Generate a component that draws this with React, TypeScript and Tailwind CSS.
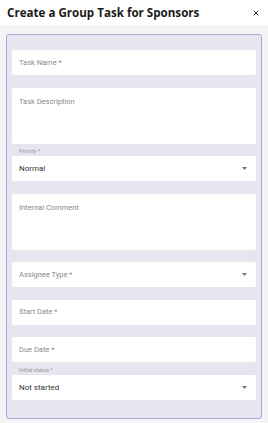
import { X } from 'lucide-react';

type Field = {
  label: string;
  kind: 'input' | 'area' | 'select';
  value?: string;
};

const fields: Field[] = [
  { label: 'Task Name *', kind: 'input' },
  { label: 'Task Description', kind: 'area' },
  { label: 'Priority *', kind: 'select', value: 'Normal' },
  { label: 'Internal Comment', kind: 'area' },
  { label: 'Assignee Type *', kind: 'select' },
  { label: 'Start Date *', kind: 'input' },
  { label: 'Due Date *', kind: 'input' },
  { label: 'Initial status *', kind: 'select', value: 'Not started' },
];

const Caret = () => (
  <svg width="5" height="3" viewBox="0 0 5 3" className="shrink-0">
    <path d="M0 0h5L2.5 3z" fill="#777" />
  </svg>
);

const FormField = ({ field }: { field: Field }) => {
  if (field.kind === 'area') {
    return (
      <div className="h-[56px] rounded-[2px] bg-white px-[7px] pt-[9px] text-[7.5px] leading-[10px] text-[#8a8a8a]">
        {field.label}
      </div>
    );
  }
  return (
    <div className="relative flex h-[25px] items-center justify-between rounded-[2px] bg-white pl-[7px] pr-[9px]">
      {field.value ? (
        <>
          {/* floating label sits over the top edge */}
          <span className="absolute left-[7px] top-[-9px] text-[5.5px] leading-[8px] text-[#9a9a9a]">
            {field.label}
          </span>
          <span className="text-[8px] leading-[11px] text-[#333]">{field.value}</span>
        </>
      ) : (
        <span className="text-[7.5px] leading-[10px] text-[#8a8a8a]">{field.label}</span>
      )}
      {field.kind === 'select' && <Caret />}
    </div>
  );
};

export default function App() {
  return (
    <div className="h-[423px] w-[268px] bg-[#f4f4f6] font-['Roboto',sans-serif]">
      <div className="flex h-[25px] items-center justify-between bg-white pl-[7px] pr-[8px]">
        <h1 className="font-['Open_Sans',sans-serif] text-[11.6px] font-bold text-[#1a1a1a]">
          Create a Group Task for Sponsors
        </h1>
        <X size={8} strokeWidth={3} className="text-[#333]" />
      </div>
      <div className="mx-[6px] mt-[9px] flex flex-col gap-[12.5px] rounded-[3px] border-[1.5px] border-[#b3a3d6] bg-[#e7e5ef] px-[5px] pb-[18px] pt-[15px]">
        {fields.map((f) => (
          <FormField key={f.label} field={f} />
        ))}
      </div>
    </div>
  );
}
